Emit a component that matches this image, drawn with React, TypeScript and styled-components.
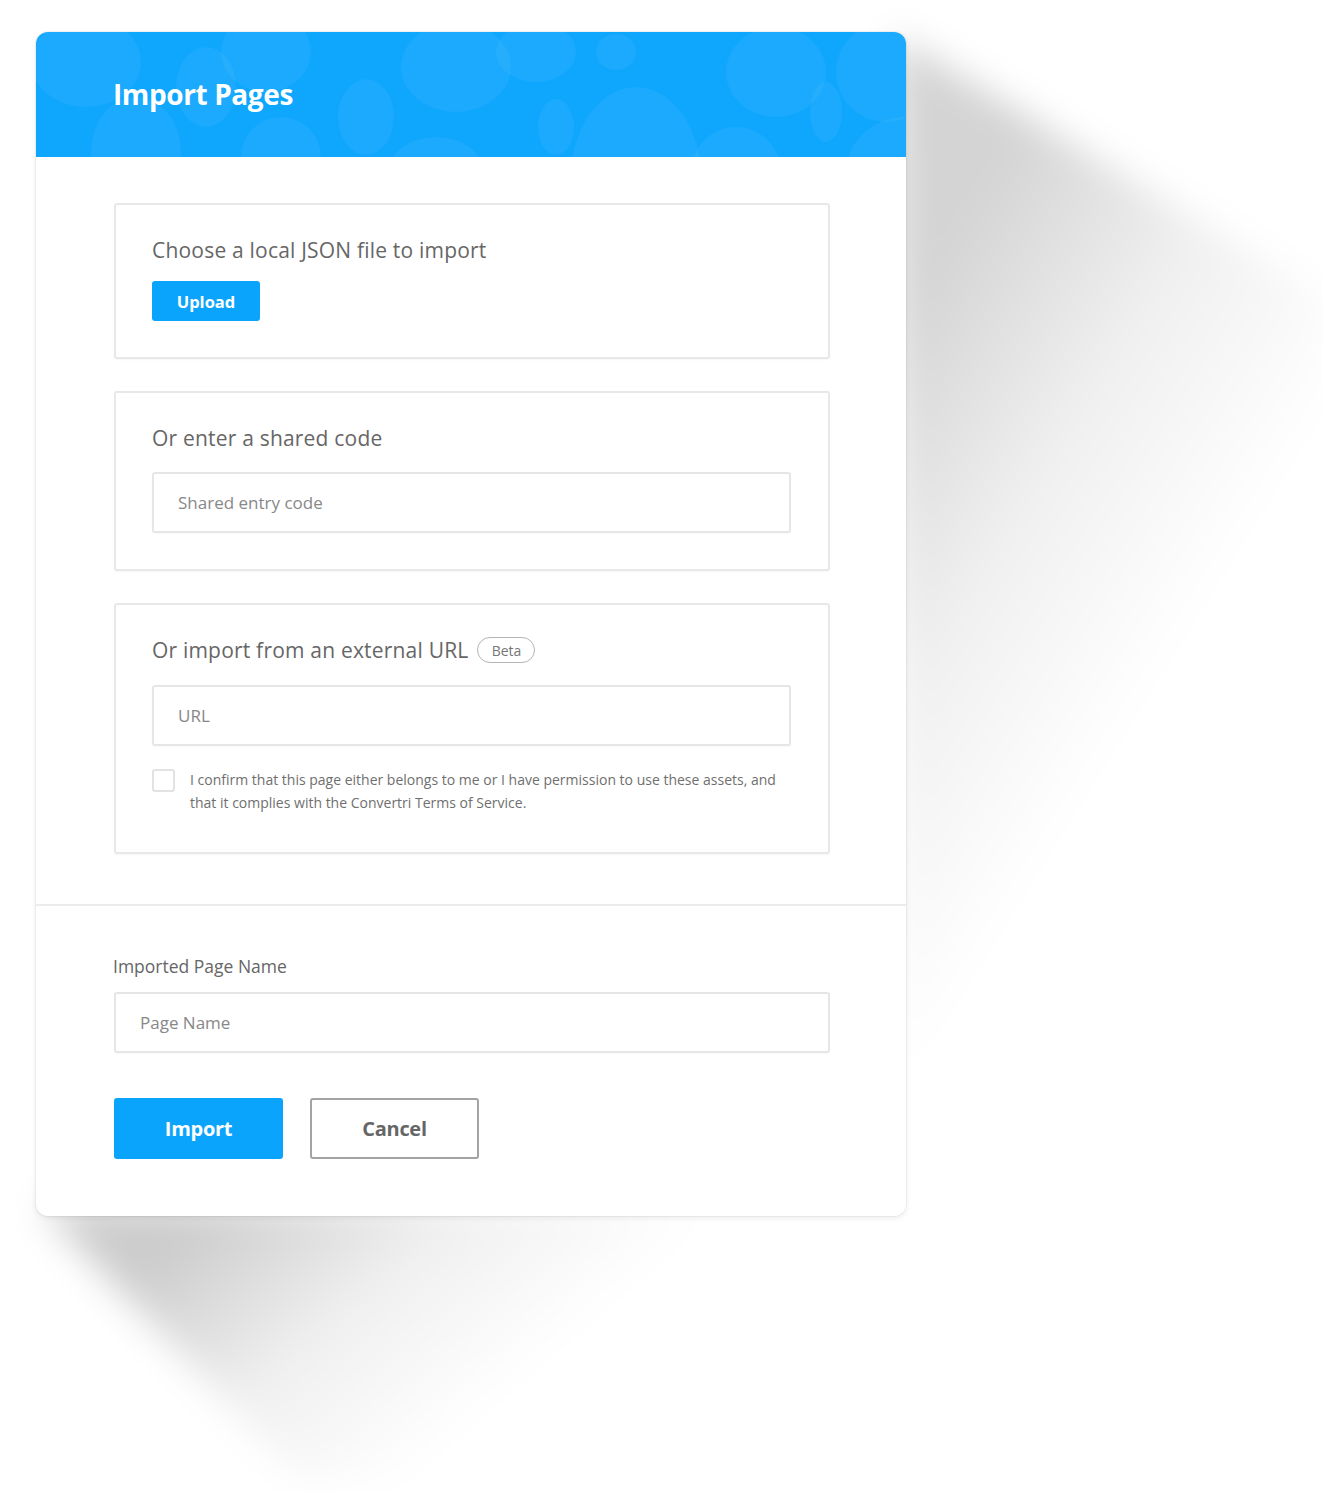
import React from 'react';
import styled, { createGlobalStyle } from 'styled-components';

const GlobalStyle = createGlobalStyle`
  html, body {
    margin: 0;
    padding: 0;
    background: #fff;
  }
  body {
    font-family: 'Open Sans', 'Liberation Sans', sans-serif;
    color: #666;
  }
  * {
    box-sizing: border-box;
  }
`;

const Stage = styled.div`
  position: relative;
  width: 1322px;
  height: 1492px;
  padding: 32px 0 0 36px;
  overflow: hidden;
`;

const CastShadow = styled.svg`
  position: absolute;
  left: 0;
  top: 0;
  width: 1322px;
  height: 1492px;
  pointer-events: none;
`;

const Card = styled.div`
  position: relative;
  width: 870px;
  height: 1184px;
  background: #fff;
  border-radius: 12px;
  box-shadow: 0 0 0 1px rgba(0, 0, 0, 0.04), 0 2px 6px rgba(0, 0, 0, 0.08);
  display: flex;
  flex-direction: column;
  overflow: hidden;
`;

const Header = styled.div`
  position: relative;
  height: 125px;
  background: #0fa6fd;
  display: flex;
  align-items: center;
  padding-left: 77px;
  overflow: hidden;
`;

const Bubbles = styled.svg`
  position: absolute;
  inset: 0;
  width: 100%;
  height: 100%;
`;

const Title = styled.h1`
  position: relative;
  margin: 0 0 2px;
  font-size: 28px;
  font-weight: 700;
  color: #fff;
  letter-spacing: -0.4px;
`;

const Body = styled.div`
  display: flex;
  flex-direction: column;
  gap: 32px;
  padding: 46px 76px 50px 78px;
  border-bottom: 2px solid #ececec;
`;

const Box = styled.section<{ $bottom?: number }>`
  border: 2px solid #e8e8e8;
  border-radius: 3px;
  padding: 32px 37px ${p => p.$bottom ?? 36}px 36px;
  box-shadow: 0 1px 2px rgba(0, 0, 0, 0.04);
`;

const BoxTitle = styled.h2<{ $gap: number }>`
  display: flex;
  align-items: center;
  gap: 9px;
  margin: 0 0 ${p => p.$gap}px;
  height: 26px;
  font-size: 21px;
  font-weight: 400;
  color: #666;
  letter-spacing: 0.2px;
`;

const Badge = styled.span`
  display: inline-flex;
  align-items: center;
  justify-content: center;
  width: 58px;
  height: 26px;
  border: 1.5px solid #b5b5b5;
  border-radius: 13px;
  font-size: 14px;
  font-weight: 400;
  color: #777;
  letter-spacing: 0;
`;

const SmallButton = styled.button`
  display: block;
  width: 108px;
  height: 40px;
  border: none;
  border-radius: 3px;
  background: #0ba4fd;
  color: #fff;
  font-family: inherit;
  font-size: 16.5px;
  font-weight: 700;
  cursor: pointer;
`;

const Field = styled.input`
  display: block;
  width: 100%;
  height: 61px;
  padding: 0 24px;
  border: 2px solid #e6e6e6;
  border-radius: 3px;
  font-family: inherit;
  font-size: 17px;
  color: #555;
  outline: none;
  box-shadow: 0 1px 2px rgba(0, 0, 0, 0.03);

  &::placeholder {
    color: #888;
  }
`;

const ConfirmRow = styled.label`
  display: flex;
  align-items: flex-start;
  gap: 15px;
  margin-top: 22px;
`;

const CheckBox = styled.span`
  flex: none;
  width: 23px;
  height: 23px;
  margin-top: 1px;
  border: 2px solid #e2e2e2;
  border-radius: 3px;
`;

const ConfirmText = styled.span`
  font-size: 14px;
  line-height: 23px;
  color: #6f6f6f;
`;

const Footer = styled.div`
  padding: 47px 76px 0 78px;
`;

const FieldLabel = styled.div`
  height: 26px;
  line-height: 26px;
  margin-bottom: 13px;
  margin-left: -1px;
  font-size: 17.5px;
  color: #666;
`;

const Actions = styled.div`
  display: flex;
  gap: 27px;
  margin-top: 45px;
`;

const ActionButton = styled.button<{ $primary?: boolean }>`
  width: 169px;
  height: 61px;
  border-radius: 3px;
  border: ${p => (p.$primary ? 'none' : '2px solid #a3a3a3')};
  background: ${p => (p.$primary ? '#0ba4fd' : '#fff')};
  color: ${p => (p.$primary ? '#fff' : '#666')};
  font-family: inherit;
  font-size: 20px;
  font-weight: 700;
  letter-spacing: -0.3px;
  cursor: pointer;
`;

// soft circles in the header band: cx, cy, rx, ry
const bubbles: [number, number, number, number][] = [
  [50, 30, 55, 45],
  [100, 120, 45, 55],
  [170, 55, 30, 40],
  [230, 20, 45, 40],
  [245, 125, 40, 40],
  [330, 85, 28, 38],
  [420, 35, 55, 45],
  [400, 135, 45, 30],
  [500, 20, 40, 30],
  [520, 95, 18, 28],
  [580, 20, 20, 18],
  [600, 145, 65, 90],
  [700, 140, 45, 45],
  [740, 40, 50, 45],
  [790, 80, 16, 30],
  [850, 40, 50, 50],
  [870, 140, 60, 55],
];

const App: React.FC = () => {
  return (
    <>
      <GlobalStyle />
      <Stage>
        <CastShadow viewBox="0 0 1322 1492">
          <defs>
            <linearGradient id="sideFade" gradientUnits="userSpaceOnUse" x1="906" y1="300" x2="1260" y2="520">
              <stop offset="0" stopColor="#000" stopOpacity="0.17" />
              <stop offset="0.5" stopColor="#000" stopOpacity="0.06" />
              <stop offset="1" stopColor="#000" stopOpacity="0" />
            </linearGradient>
            <linearGradient id="baseFade" gradientUnits="userSpaceOnUse" x1="200" y1="1216" x2="420" y2="1470">
              <stop offset="0" stopColor="#000" stopOpacity="0.2" />
              <stop offset="0.5" stopColor="#000" stopOpacity="0.06" />
              <stop offset="1" stopColor="#000" stopOpacity="0" />
            </linearGradient>
            <filter id="shadeBlur" x="-30%" y="-30%" width="160%" height="160%">
              <feGaussianBlur stdDeviation="18" />
            </filter>
          </defs>
          <polygon
            points="896,36 1330,300 1330,400 900,1180"
            fill="url(#sideFade)"
            filter="url(#shadeBlur)"
          />
          <polygon
            points="40,1206 900,1206 900,1230 420,1480 300,1480"
            fill="url(#baseFade)"
            filter="url(#shadeBlur)"
          />
        </CastShadow>

        <Card>
          <Header>
            <Bubbles viewBox="0 0 870 125" preserveAspectRatio="none">
              {bubbles.map(([cx, cy, rx, ry], i) => (
                <ellipse key={i} cx={cx} cy={cy} rx={rx} ry={ry} fill="#fff" fillOpacity="0.05" />
              ))}
            </Bubbles>
            <Title>Import Pages</Title>
          </Header>

          <Body>
            <Box>
              <BoxTitle $gap={18}>Choose a local JSON file to import</BoxTitle>
              <SmallButton type="button">Upload</SmallButton>
            </Box>

            <Box>
              <BoxTitle $gap={21}>Or enter a shared code</BoxTitle>
              <Field placeholder="Shared entry code" />
            </Box>

            <Box $bottom={38}>
              <BoxTitle $gap={22}>
                Or import from an external URL
                <Badge>Beta</Badge>
              </BoxTitle>
              <Field placeholder="URL" />
              <ConfirmRow>
                <CheckBox />
                <ConfirmText>
                  I confirm that this page either belongs to me or I have permission to use these assets, and
                  <br />
                  that it complies with the Convertri Terms of Service.
                </ConfirmText>
              </ConfirmRow>
            </Box>
          </Body>

          <Footer>
            <FieldLabel>Imported Page Name</FieldLabel>
            <Field placeholder="Page Name" />
            <Actions>
              <ActionButton $primary type="button">Import</ActionButton>
              <ActionButton type="button">Cancel</ActionButton>
            </Actions>
          </Footer>
        </Card>
      </Stage>
    </>
  );
};

export default App;
